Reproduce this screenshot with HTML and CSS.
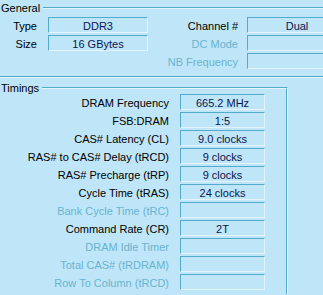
FILE: index.html
```html
<!DOCTYPE html>
<html>
<head>
  <title>Memory</title>
  <link rel="stylesheet" href="styles.css">
</head>
<body>
  <div class="group general">
    <div class="group-body">
      <div class="legend">General</div>
      <div class="general-grid">
        <span class="lbl">Type</span>
        <span class="val">DDR3</span>
        <span class="lbl lbl-right">Channel #</span>
        <span class="val">Dual</span>

        <span class="lbl">Size</span>
        <span class="val">16 GBytes</span>
        <span class="lbl lbl-right off">DC Mode</span>
        <span class="val"></span>

        <span class="lbl"></span>
        <span></span>
        <span class="lbl lbl-right off">NB Frequency</span>
        <span class="val"></span>
      </div>
    </div>
  </div>

  <div class="group timings">
    <div class="group-body">
      <div class="legend">Timings</div>
      <div class="timings-grid">
        <span class="lbl">DRAM Frequency</span>
        <span class="val">665.2 MHz</span>
        <span class="lbl">FSB:DRAM</span>
        <span class="val">1:5</span>
        <span class="lbl">CAS# Latency (CL)</span>
        <span class="val">9.0 clocks</span>
        <span class="lbl">RAS# to CAS# Delay (tRCD)</span>
        <span class="val">9 clocks</span>
        <span class="lbl">RAS# Precharge (tRP)</span>
        <span class="val">9 clocks</span>
        <span class="lbl">Cycle Time (tRAS)</span>
        <span class="val">24 clocks</span>
        <span class="lbl off">Bank Cycle Time (tRC)</span>
        <span class="val"></span>
        <span class="lbl">Command Rate (CR)</span>
        <span class="val">2T</span>
        <span class="lbl off">DRAM Idle Timer</span>
        <span class="val"></span>
        <span class="lbl off">Total CAS# (tRDRAM)</span>
        <span class="val"></span>
        <span class="lbl off">Row To Column (tRCD)</span>
        <span class="val"></span>
      </div>
    </div>
  </div>
</body>
</html>
```

FILE: styles.css
```css
html, body {
    margin: 0;
    height: 100%;
    overflow: hidden;
}

body {
    background: #bee6f8;
    font-family: "Liberation Sans", Arial, sans-serif;
    font-size: 11px;
    color: #000;
}

/* etched group frame: dark line then light line */
.group {
    border-top: 1px solid #53aacb;
}

.group-body {
    border-top: 1px solid #e4f5fd;
}

.legend {
    width: fit-content;
    margin-top: -7px;
    padding: 0 3px 0 1px;
    line-height: 13px;
    height: 13px;
    background: #bee6f8;
}

.general {
    margin-top: 7px;
    border-bottom: 1px solid #e4f5fd;
}

.general .group-body {
    border-bottom: 1px solid #53aacb;
    padding-bottom: 7px;
}

.general-grid {
    display: grid;
    grid-template-columns: 48px 100px 99px 100px;
    grid-auto-rows: 16px;
    row-gap: 2px;
    margin-top: 2px;
    overflow: hidden;
}

.general-grid .lbl {
    padding-right: 11px;
}

.general-grid .lbl-right {
    padding-right: 9px;
}

.timings {
    margin-top: 9px;
    width: 287px;
    border-right: 1px solid #e4f5fd;
}

.timings .group-body {
    border-right: 1px solid #53aacb;
    height: 205px;
}

.timings-grid {
    display: grid;
    grid-template-columns: 169px 85px;
    column-gap: 11px;
    grid-auto-rows: 16px;
    row-gap: 2px;
    margin-top: -1px;
}

.lbl {
    text-align: right;
    white-space: nowrap;
    padding-top: 3px;
    line-height: 13px;
}

.lbl.off {
    color: #69b3ce;
}

.val {
    box-sizing: border-box;
    border-top: 1px solid #53aacb;
    border-left: 1px solid #53aacb;
    border-bottom: 1px solid #e4f5fd;
    border-right: 1px solid #e4f5fd;
    padding-top: 2px;
    line-height: 13px;
    text-align: center;
    color: #0c1450;
    white-space: nowrap;
}
```
